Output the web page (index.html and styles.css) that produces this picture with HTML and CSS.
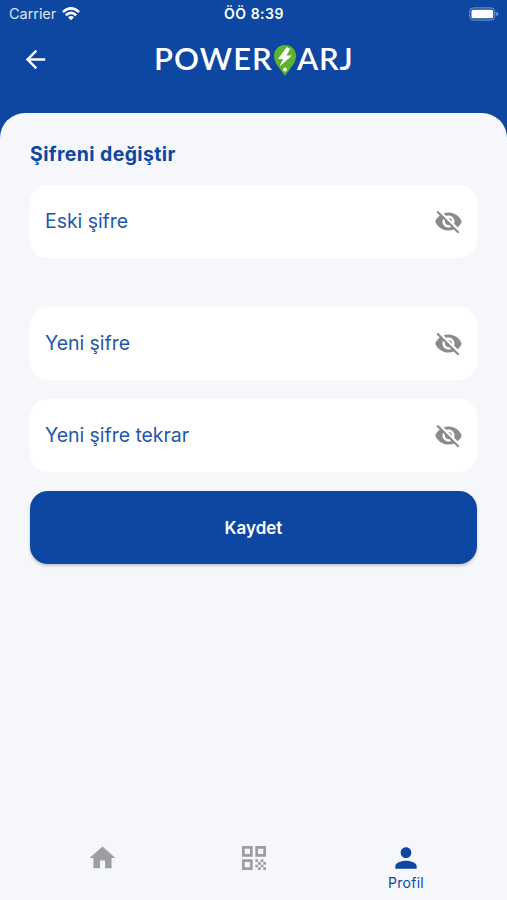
FILE: index.html
```html
<!DOCTYPE html>
<html lang="tr">
<head>
<meta charset="utf-8">
<title>Şifreni değiştir</title>
<link rel="stylesheet" href="styles.css">
</head>
<body>
<svg class="defs" width="0" height="0">
  <symbol id="eye-off" viewBox="0 0 24 24"><path d="M12 7c2.76 0 5 2.24 5 5 0 .65-.13 1.26-.36 1.83l2.92 2.92c1.51-1.26 2.7-2.89 3.43-4.75-1.73-4.39-6-7.5-11-7.5-1.4 0-2.74.25-3.98.7l2.16 2.16C10.74 7.13 11.35 7 12 7zM2 4.27l2.28 2.28.46.46C3.08 8.3 1.78 10.02 1 12c1.73 4.39 6 7.5 11 7.5 1.55 0 3.03-.3 4.38-.84l.42.42L19.73 22 21 20.73 3.27 3 2 4.27zM7.53 9.8l1.55 1.55c-.05.21-.08.43-.08.65 0 1.66 1.34 3 3 3 .22 0 .44-.03.65-.08l1.55 1.55c-.67.33-1.41.53-2.2.53-2.76 0-5-2.24-5-5 0-.79.2-1.53.53-2.2zm4.31-.78l3.15 3.15.02-.16c0-1.66-1.34-3-3-3l-.17.01z"/></symbol>
</svg>
<header class="header">
  <div class="status">
    <div class="carrier"><span>Carrier</span>
      <svg class="wifi" viewBox="0 0 18 14" fill="none" stroke="#fff" stroke-width="2.5"><path d="M.9 5.1Q9-2.3 17.1 5.1M3.8 8.2Q9 3.5 14.2 8.2"/><path d="M6 10.2Q9 7.6 12 10.2L9 13.3Z" fill="#fff" stroke="none"/></svg>
    </div>
    <span class="time">ÖÖ 8:39</span>
    <svg class="battery" viewBox="0 0 31 14"><rect x=".7" y=".7" width="26" height="12.6" rx="4" fill="none" stroke="#7f9dce"/><rect x="2.5" y="2.5" width="22.5" height="9" rx="2" fill="#fff"/><path d="M28.3 4.5Q30.5 6 30.5 7T28.3 9.5Z" fill="#7f9dce"/></svg>
  </div>
  <div class="bar">
    <svg class="back" viewBox="0 0 24 24"><path fill="#fff" d="M20 11H7.83l5.59-5.59L12 4l-8 8 8 8 1.41-1.41L7.83 13H20v-2z"/></svg>
    <div class="logo"><span class="power">POWER</span>
      <svg class="pin" viewBox="0 0 22 31"><path fill="#5db32e" d="M11 0C4.6 0 0 4.8 0 10.8 0 19 7.2 24.5 11 31 14.8 24.5 22 19 22 10.8 22 4.8 17.4 0 11 0Z"/><path fill="#fff" d="M12.8 2 4 14h5.2L5.6 21.5 18 10.4h-5.5L16.2 4Z"/><circle cx="11" cy="24.5" r="1.9" fill="#fff"/></svg>
      <span class="arj">ARJ</span></div>
  </div>
</header>
<main class="sheet">
  <h1>Şifreni değiştir</h1>
  <div class="field current"><span class="old">Eski şifre</span><svg><use href="#eye-off"/></svg></div>
  <div class="field"><span class="new">Yeni şifre</span><svg><use href="#eye-off"/></svg></div>
  <div class="field"><span class="repeat">Yeni şifre tekrar</span><svg><use href="#eye-off"/></svg></div>
  <button class="save">Kaydet</button>
</main>
<nav class="tabs">
  <a class="tab"><svg class="home" viewBox="0 0 24 24"><path d="M10 20v-6h4v6h5v-8h3L12 3 2 12h3v8z"/></svg></a>
  <a class="tab"><svg viewBox="0 0 24 24"><path d="M3 11h8V3H3v8zm2-6h4v4H5V5zM3 21h8v-8H3v8zm2-6h4v4H5v-4zM13 3v8h8V3h-8zm6 6h-4V5h4v4zM19 19h2v2h-2zM13 13h2v2h-2zM15 15h2v2h-2zM13 17h2v2h-2zM15 19h2v2h-2zM17 17h2v2h-2zM17 13h2v2h-2zM19 15h2v2h-2z"/></svg></a>
  <a class="tab active"><svg viewBox="0 0 24 24"><path d="M12 12c2.21 0 4-1.79 4-4s-1.79-4-4-4-4 1.79-4 4 1.79 4 4 4zm0 2c-2.67 0-8 1.34-8 4v2h16v-2c0-2.66-5.33-4-8-4z"/></svg><span>Profil</span></a>
</nav>
</body>
</html>
```
FILE: styles.css
```css
* { box-sizing: border-box; }
body {
  margin: 0;
  height: 900px;
  display: flex;
  flex-direction: column;
  overflow: hidden;
  font-family: Inter, sans-serif;
  color: #0d47a1;
  background: linear-gradient(#0d47a1 160px, #f5f7fb 160px);
}
svg { display: block; flex: none; }
.defs { position: absolute; }
.header { height: 113px; color: #fff; }
.status {
  height: 27px;
  padding: 0 8px 0 9px;
  display: grid;
  grid-template-columns: 1fr auto 1fr;
  align-items: center;
}
.carrier { display: flex; align-items: center; gap: 6px; font-size: 14.5px; color: #dce6f5; }
.carrier span { letter-spacing: -.05px; }
.wifi { width: 18px; height: 14px; }
.time { font-size: 14px; font-weight: 600; letter-spacing: .5px; }
.battery { width: 30px; height: 14px; justify-self: end; }
.bar { display: flex; align-items: center; height: 65px; padding-left: 21px; }
.back { width: 29px; height: 29px; }
.logo {
  display: flex;
  align-items: center;
  margin-left: 104px;
  font: 600 31px/32px Lato, sans-serif;
}
.logo span { padding-bottom: 3px; }
.power { width: 119px; letter-spacing: 1.1px; }
.arj { letter-spacing: .8px; }
.pin { width: 22px; height: 31px; margin: 1px 1px 0 1px; }
.sheet {
  flex: 1;
  padding: 28px 30px 0;
  border-radius: 25px 25px 0 0;
  background: #f5f7fb;
}
h1 { margin: 0 0 18px; font-size: 19.5px; line-height: 26px; font-weight: 700; letter-spacing: .38px; white-space: nowrap; }
.field {
  height: 73px;
  margin-bottom: 19px;
  padding: 0 14px 0 15px;
  display: flex;
  align-items: center;
  justify-content: space-between;
  border-radius: 18px;
  background: #fff;
  color: #2457aa;
  font-size: 19.5px;
  letter-spacing: -.05px;
}
.field span { padding-bottom: 2px; }
.field.current { margin-bottom: 49px; }
.field svg { width: 29px; height: 29px; fill: #8b8b8b; }
.save {
  width: 100%;
  height: 73px;
  border: 0;
  padding: 0;
  border-radius: 18px;
  background: #0d47a1;
  color: #fff;
  font: 600 17px Inter, sans-serif;
  box-shadow: 0 2px 3px #0003;
}
.tabs { height: 73px; padding: 0 25px 0 26px; display: grid; grid-template-columns: repeat(3, 1fr); background: #f5f7fb; }
.tab { padding-top: 15px; display: flex; flex-direction: column; align-items: center; color: #9c9e9f; font-size: 14px; }
.tab svg { width: 32px; height: 32px; fill: currentColor; }
.tab .home { width: 31px; }
.tab.active { color: #0d47a1; }
.tab span { line-height: 18px; letter-spacing: .25px; }
```
